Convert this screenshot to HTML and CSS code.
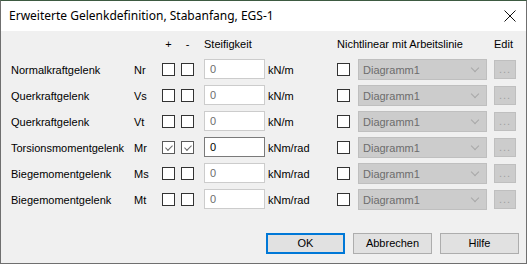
FILE: index.html
```
<!DOCTYPE html>
<html lang="de">
<head>
    <meta charset="UTF-8">
    <meta name="viewport" content="width=device-width, initial-scale=1.0">
    <link rel="stylesheet" href="styles.css">
    <title>Erweiterte Gelenkdefinition</title>
</head>
<body>
  <div class="dialog">
    <div class="titlebar">
      <span class="title">Erweiterte Gelenkdefinition, Stabanfang, EGS-1</span>
      <svg class="close" width="12" height="12" viewBox="0 0 12 12">
        <path d="M0.5 0.5 L11.5 11.5 M11.5 0.5 L0.5 11.5" stroke="#111" stroke-width="1" fill="none"/>
      </svg>
    </div>
    <div class="content">
      <div class="grid">
        <!-- header -->
        <div class="head"></div>
        <div class="head"></div>
        <div class="head center">+</div>
        <div class="head center">-</div>
        <div class="head span2">Steifigkeit</div>
        <div class="head span2">Nichtlinear mit Arbeitslinie</div>
        <div class="head">Edit</div>

        <!-- Nr -->
        <div class="lbl">Normalkraftgelenk</div>
        <div class="sym">Nr</div>
        <div><span class="chk"></span></div>
        <div><span class="chk"></span></div>
        <div><span class="field off">0</span></div>
        <div class="unit">kN/m</div>
        <div><span class="chk"></span></div>
        <div><span class="combo">Diagramm1<i class="chev"></i></span></div>
        <div><span class="dots">...</span></div>

        <!-- Vs -->
        <div class="lbl">Querkraftgelenk</div>
        <div class="sym">Vs</div>
        <div><span class="chk"></span></div>
        <div><span class="chk"></span></div>
        <div><span class="field off">0</span></div>
        <div class="unit">kN/m</div>
        <div><span class="chk"></span></div>
        <div><span class="combo">Diagramm1<i class="chev"></i></span></div>
        <div><span class="dots">...</span></div>

        <!-- Vt -->
        <div class="lbl">Querkraftgelenk</div>
        <div class="sym">Vt</div>
        <div><span class="chk"></span></div>
        <div><span class="chk"></span></div>
        <div><span class="field off">0</span></div>
        <div class="unit">kN/m</div>
        <div><span class="chk"></span></div>
        <div><span class="combo">Diagramm1<i class="chev"></i></span></div>
        <div><span class="dots">...</span></div>

        <!-- Mr -->
        <div class="lbl">Torsionsmomentgelenk</div>
        <div class="sym">Mr</div>
        <div><span class="chk on"></span></div>
        <div><span class="chk on"></span></div>
        <div><span class="field">0</span></div>
        <div class="unit">kNm/rad</div>
        <div><span class="chk"></span></div>
        <div><span class="combo">Diagramm1<i class="chev"></i></span></div>
        <div><span class="dots">...</span></div>

        <!-- Ms -->
        <div class="lbl">Biegemomentgelenk</div>
        <div class="sym">Ms</div>
        <div><span class="chk"></span></div>
        <div><span class="chk"></span></div>
        <div><span class="field off">0</span></div>
        <div class="unit">kNm/rad</div>
        <div><span class="chk"></span></div>
        <div><span class="combo">Diagramm1<i class="chev"></i></span></div>
        <div><span class="dots">...</span></div>

        <!-- Mt -->
        <div class="lbl">Biegemomentgelenk</div>
        <div class="sym">Mt</div>
        <div><span class="chk"></span></div>
        <div><span class="chk"></span></div>
        <div><span class="field off">0</span></div>
        <div class="unit">kNm/rad</div>
        <div><span class="chk"></span></div>
        <div><span class="combo">Diagramm1<i class="chev"></i></span></div>
        <div><span class="dots">...</span></div>
      </div>

      <div class="buttons">
        <span class="btn default">OK</span>
        <span class="btn">Abbrechen</span>
        <span class="btn">Hilfe</span>
      </div>
    </div>
  </div>
</body>
</html>
```

FILE: styles.css
```
html,body {
  margin: 0;
  padding: 0;
}
body {
  width: 527px;
  height: 264px;
  overflow: hidden;
  font-family: "Liberation Sans", Arial, sans-serif;
  font-size: 11px;
  color: #000;
}
.dialog {
  box-sizing: border-box;
  width: 527px;
  height: 264px;
  border: 1px solid #6f6f6f;
  border-top-color: #3d5a41;
  background-color: #f0f0f0;
  display: flex;
  flex-direction: column;
}
.titlebar {
  height: 30px;
  background-color: #fff;
  display: flex;
  align-items: center;
  justify-content: space-between;
  padding: 0 10px 0 8px;
}
.title {
  font-family: "Noto Sans", sans-serif;
  font-size: 12px;
  line-height: 16px;
}
.close {
  display: block;
}
.content {
  flex: 1;
  padding: 9px 0 0 10px;
  display: flex;
  flex-direction: column;
}
.grid {
  display: grid;
  grid-template-columns: 122px 29px 19px 23px 64px 69px 21px 136px 22px;
  grid-template-rows: 16px repeat(6, 26px);
  align-items: center;
}
.grid > div {
  display: flex;
  align-items: center;
  white-space: nowrap;
}
.lbl, .sym, .unit {
  padding-top: 2px;
}
.head {
  margin-bottom: 10px;
  height: 16px;
  padding-top: 1px;
}
.center {
  justify-content: center;
  width: 13px;
}
.span2 {
  grid-column: span 2;
}
.sym {
  padding-left: 1px;
}
.chk {
  box-sizing: border-box;
  display: block;
  width: 13px;
  height: 13px;
  border: 1px solid #333;
  background-color: #fff;
  position: relative;
}
.chk.on {
  border-color: #5a5a5a;
}
.chk.on::after {
  content: '';
  position: absolute;
  left: 2px;
  top: 0;
  width: 6px;
  height: 3px;
  border-left: 1px solid #6a6a6a;
  border-bottom: 1px solid #6a6a6a;
  transform: translate(0.5px, 3px) rotate(-45deg);
}
.field {
  box-sizing: border-box;
  display: block;
  width: 61px;
  height: 20px;
  line-height: 19px;
  padding-left: 5px;
  background-color: #fff;
  border: 1px solid #7a7a7a;
}
.field.off {
  border-color: #cccccc;
  color: #6d6d6d;
}
.combo {
  box-sizing: border-box;
  display: block;
  position: relative;
  width: 129px;
  height: 21px;
  line-height: 20px;
  padding-left: 4px;
  background-color: #cccccc;
  border: 1px solid #bfbfbf;
  color: #6d6d6d;
}
.chev {
  position: absolute;
  right: 8px;
  top: 5px;
  width: 5px;
  height: 5px;
  border-right: 1px solid #a8a8a8;
  border-bottom: 1px solid #a8a8a8;
  transform: rotate(45deg);
}
.dots {
  box-sizing: border-box;
  display: block;
  width: 22px;
  height: 19px;
  line-height: 16px;
  text-align: center;
  background-color: #cccccc;
  border: 1px solid #bfbfbf;
  color: #a0a0a0;
  letter-spacing: 1px;
}
.buttons {
  display: flex;
  justify-content: flex-end;
  gap: 8px;
  margin-top: auto;
  padding: 0 7px 9px 0;
}
.btn {
  box-sizing: border-box;
  width: 79px;
  height: 21px;
  line-height: 19px;
  text-align: center;
  background-color: #e1e1e1;
  border: 1px solid #adadad;
}
.btn.default {
  border: 2px solid #0078d7;
  line-height: 17px;
}
```
